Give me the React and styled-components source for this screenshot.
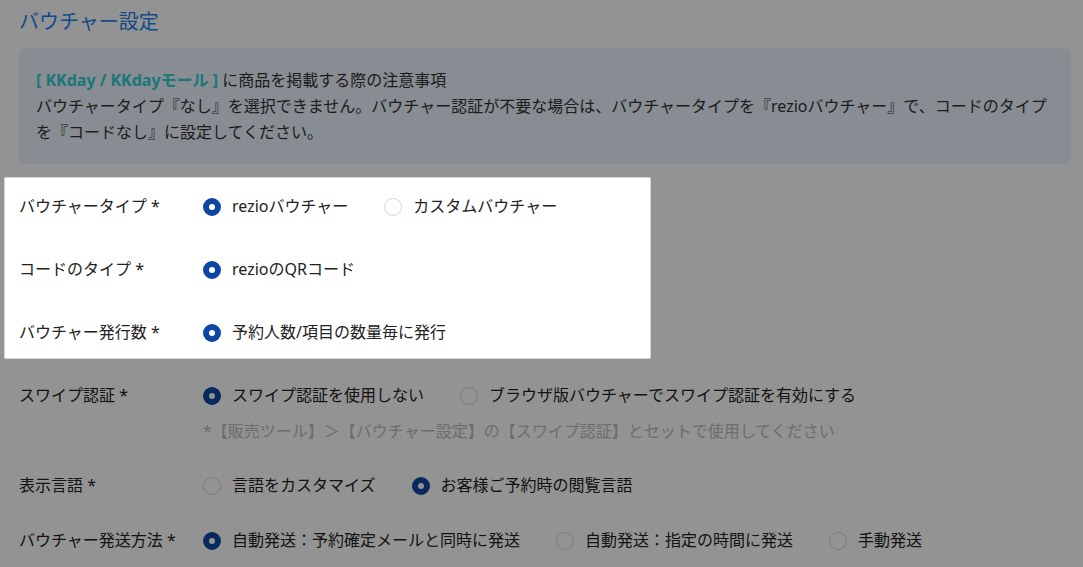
import React from 'react';
import styled, { createGlobalStyle } from 'styled-components';

const rows = [
  {
    label: 'バウチャータイプ',
    options: [
      { text: 'rezioバウチャー', checked: true },
      { text: 'カスタムバウチャー' },
    ],
  },
  {
    label: 'コードのタイプ',
    options: [{ text: 'rezioのQRコード', checked: true }],
  },
  {
    label: 'バウチャー発行数',
    options: [{ text: '予約人数/項目の数量毎に発行', checked: true }],
  },
];

const moreRows = [
  {
    label: 'スワイプ認証',
    options: [
      { text: 'スワイプ認証を使用しない', checked: true },
      { text: 'ブラウザ版バウチャーでスワイプ認証を有効にする' },
    ],
    note: '*【販売ツール】＞【バウチャー設定】の【スワイプ認証】とセットで使用してください',
  },
  {
    label: '表示言語',
    tight: true,
    options: [
      { text: '言語をカスタマイズ' },
      { text: 'お客様ご予約時の閲覧言語', checked: true },
    ],
  },
  {
    label: 'バウチャー発送方法',
    options: [
      { text: '自動発送：予約確定メールと同時に発送', checked: true },
      { text: '自動発送：指定の時間に発送' },
      { text: '手動発送' },
    ],
  },
];

const FieldRow = ({ row }) => (
  <Row $tight={row.tight}>
    <Label>{row.label} *</Label>
    <div>
      <Options>
        {row.options.map((o) => (
          <Option key={o.text}>
            <Radio $checked={o.checked} />
            {o.text}
          </Option>
        ))}
      </Options>
      {row.note && <Note>{row.note}</Note>}
    </div>
  </Row>
);

const App = () => {
  return (
    <Page>
      <GlobalStyle />
      <Title>バウチャー設定</Title>

      <Notice>
        <Brand>[ KKday / KKdayモール ]</Brand> に商品を掲載する際の注意事項
        <br />
        バウチャータイプ『なし』を選択できません。バウチャー認証が不要な場合は、バウチャータイプを『rezioバウチャー』で、コードのタイプを『コードなし』に設定してください。
      </Notice>

      <Form>
        <VoucherGroup>
          <Spotlight />
          {rows.map((r) => <FieldRow key={r.label} row={r} />)}
        </VoucherGroup>
        {moreRows.map((r) => <FieldRow key={r.label} row={r} />)}
      </Form>
    </Page>
  );
};

export default App;

const GlobalStyle = createGlobalStyle`
  html, body {
    margin: 0;
    background: #fff;
  }
  body {
    font-family: "Noto Sans", "Noto Sans CJK JP", sans-serif;
    color: #222;
    overflow: hidden;
  }
`;

const Page = styled.div`
  padding: 7px 12px 40px 19px;
`;

const Title = styled.h2`
  margin: 0 0 11px;
  font-size: 20px;
  font-weight: 400;
  line-height: 30px;
  color: #1e82ee;
`;

const Notice = styled.div`
  background: #eaf5ff;
  border-radius: 6px;
  padding: 19px 17px 19px;
  font-size: 16px;
  line-height: 26px;
  color: #333;
`;

const Brand = styled.strong`
  color: #2ecfd2;
  font-weight: 700;
`;

const Form = styled.div`
  margin-top: 11px;
`;

const VoucherGroup = styled.div`
  position: relative;
`;

const Spotlight = styled.div`
  position: absolute;
  top: 2px;
  bottom: 5px;
  left: -15px;
  width: 647px;
  border-radius: 2px;
  box-shadow: inset 0 0 0 1px rgba(0, 0, 0, 0.16), 0 0 0 3000px rgba(0, 0, 0, 0.424);
  pointer-events: none;
  z-index: 10;
`;

const Row = styled.div`
  display: grid;
  grid-template-columns: 184px 1fr;
  padding: 18px 0 ${(p) => (p.$tight ? '10px' : '18px')};
  font-size: 16px;
  line-height: 27px;
`;

const Label = styled.div`
  color: #222;
`;

const Options = styled.div`
  display: flex;
  flex-wrap: wrap;
`;

const Option = styled.label`
  display: inline-flex;
  align-items: center;
  gap: 11px;
  margin-right: 36px;
  color: #222;
`;

const Radio = styled.span`
  width: 18px;
  height: 18px;
  box-sizing: border-box;
  border-radius: 50%;
  background: #fff;
  border: ${(p) => (p.$checked ? '6px solid #0d47a1' : '1px solid #d6d6d6')};
  flex: none;
`;

const Note = styled.div`
  margin: 12px 0 -5px;
  line-height: 20px;
  color: #bdbdbd;
`;
